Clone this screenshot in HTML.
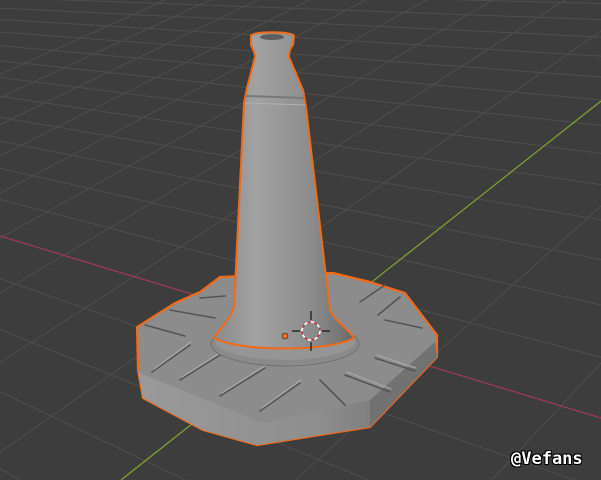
<!DOCTYPE html>
<html><head><style>
html,body{margin:0;padding:0;background:#3d3d3d;width:601px;height:480px;overflow:hidden}
svg{display:block}
.wm{position:absolute;left:511px;top:449px;font:bold 17px "DejaVu Sans Mono","Liberation Mono",monospace;color:#fff;text-shadow:1px 1px 0 #000,-1px -1px 0 #000,1px -1px 0 #000,-1px 1px 0 #000;line-height:20px}
</style></head><body>
<svg id="s" width="601" height="480" viewBox="0 0 601 480" style="position:absolute;left:0;top:0">
<defs>
<linearGradient id="cg" x1="0" x2="1" y1="0" y2="0">
<stop offset="0" stop-color="#8a8a8a"/><stop offset="0.3" stop-color="#a2a2a2"/><stop offset="0.7" stop-color="#8c8c8c"/><stop offset="1" stop-color="#6a6a6a"/>
</linearGradient>
<linearGradient id="sg" x1="0" x2="1" y1="0" y2="0">
<stop offset="0" stop-color="#9a9a9a"/><stop offset="0.6" stop-color="#8e8e8e"/><stop offset="1" stop-color="#6e6e6e"/>
</linearGradient>
</defs>
<g id="grid" stroke="#4e4e4e" stroke-width="1"></g>
<line x1="0" y1="236" x2="601" y2="418" stroke="#9a3a50" stroke-width="1.3"/>
<line x1="121" y1="480" x2="601" y2="101" stroke="#7a9e30" stroke-width="1.3"/>
<polygon points="137,327 175,303 200,292 220,277 333,273 370,282 405,293 437,335 437,357 370,427 257,445 203,430 143,398 138,370" fill="#8c8c8c" stroke="#f06a1a" stroke-width="2.2" stroke-linejoin="round"/>
<polygon points="140,373 263,423 370,400 435,342 437,357 370,427 257,445 203,430 143,398 138,370" fill="url(#sg)"/>
<polygon points="370,400 435,342 437,357 370,427" fill="#727272"/>
<g stroke="#555" stroke-width="1.6" stroke-linecap="round">
<line x1="152" y1="372" x2="190" y2="345"/>
<line x1="180" y1="380" x2="225" y2="352"/>
<line x1="220" y1="396" x2="265" y2="368"/>
<line x1="260" y1="411" x2="300" y2="383"/>
<line x1="320" y1="380" x2="345" y2="405"/>
<line x1="345" y1="375" x2="390" y2="392"/>
<line x1="375" y1="358" x2="415" y2="371"/>
<line x1="360" y1="302" x2="385" y2="285"/>
<line x1="378" y1="315" x2="400" y2="297"/>
<line x1="145" y1="325" x2="185" y2="336"/>
<line x1="170" y1="310" x2="215" y2="318"/>
<line x1="200" y1="298" x2="225" y2="296"/>
<line x1="385" y1="320" x2="422" y2="328"/>
</g>
<g stroke="#a8a8a8" stroke-width="1.2" stroke-linecap="round">
<line x1="154" y1="369" x2="191" y2="342"/>
<line x1="182" y1="377" x2="226" y2="349"/>
<line x1="222" y1="393" x2="266" y2="365"/>
<line x1="262" y1="408" x2="301" y2="380"/>
<line x1="347" y1="372" x2="391" y2="389"/>
<line x1="377" y1="355" x2="416" y2="368"/>
</g>
<ellipse cx="285" cy="344" rx="74" ry="22" fill="#8a8a8a" stroke="#707070" stroke-width="1"/>
<ellipse cx="285" cy="341" rx="70" ry="19" fill="#959595"/>
<path d="M251,36 C250,31 294,31 294,36 L293,45 C290,48 289,52 289,57 L303,90 L306,107 L330,310 C335,322 350,330 354,338 C330,352 240,352 214,338 C220,328 230,320 234,307 L244,103 L247,88 L255,57 C255,52 252,48 251,45 Z" fill="url(#cg)" stroke="#f06a1a" stroke-width="2" stroke-linejoin="round"/>
<ellipse cx="272" cy="37" rx="12" ry="3" fill="#5e5e5e"/>
<line x1="246" y1="96" x2="304" y2="98" stroke="#7a7a7a" stroke-width="2"/>
<line x1="246" y1="103" x2="305" y2="105" stroke="#b0b0b0" stroke-width="1"/>
<circle cx="285" cy="336" r="3" fill="#f06a1a" stroke="#222" stroke-width="0.6"/>
<circle cx="311" cy="331" r="9" fill="none" stroke="#fff" stroke-width="1.6" stroke-dasharray="4 3"/>
<circle cx="311" cy="331" r="9" fill="none" stroke="#d03030" stroke-width="1.6" stroke-dasharray="3 4" stroke-dashoffset="3.5"/>
<g stroke="#111" stroke-width="1.2">
<line x1="311" y1="311" x2="311" y2="320"/><line x1="311" y1="342" x2="311" y2="351"/>
<line x1="292" y1="331" x2="300" y2="331"/><line x1="322" y1="331" x2="330" y2="331"/>
</g>
</svg>
<div class="wm">@Vefans</div>
<script>
(function(){
var g=document.getElementById('grid');
var O=[311,330],V1=[-893,-35],V2=[1500,-600],k1=0.086,k2=0.041;
function P(u,v){var d=1+u*k1+v*k2;return [(O[0]+u*k1*V1[0]+v*k2*V2[0])/d,(O[1]+u*k1*V1[1]+v*k2*V2[1])/d];}
var s='',eps=0.22;
for(var v=-40;v<=18;v++){if(v==0)continue;var umin=(eps-1-v*k2)/k1;var a=P(umin,v),b=P(400,v);
s+='<line x1="'+a[0].toFixed(1)+'" y1="'+a[1].toFixed(1)+'" x2="'+b[0].toFixed(1)+'" y2="'+b[1].toFixed(1)+'"/>';}
for(var u=-40;u<=9;u++){if(u==0)continue;var vmin=(eps-1-u*k1)/k2;var a=P(u,vmin),b=P(u,400);
s+='<line x1="'+a[0].toFixed(1)+'" y1="'+a[1].toFixed(1)+'" x2="'+b[0].toFixed(1)+'" y2="'+b[1].toFixed(1)+'"/>';}
g.innerHTML=s;
})();
</script>
</body></html>
